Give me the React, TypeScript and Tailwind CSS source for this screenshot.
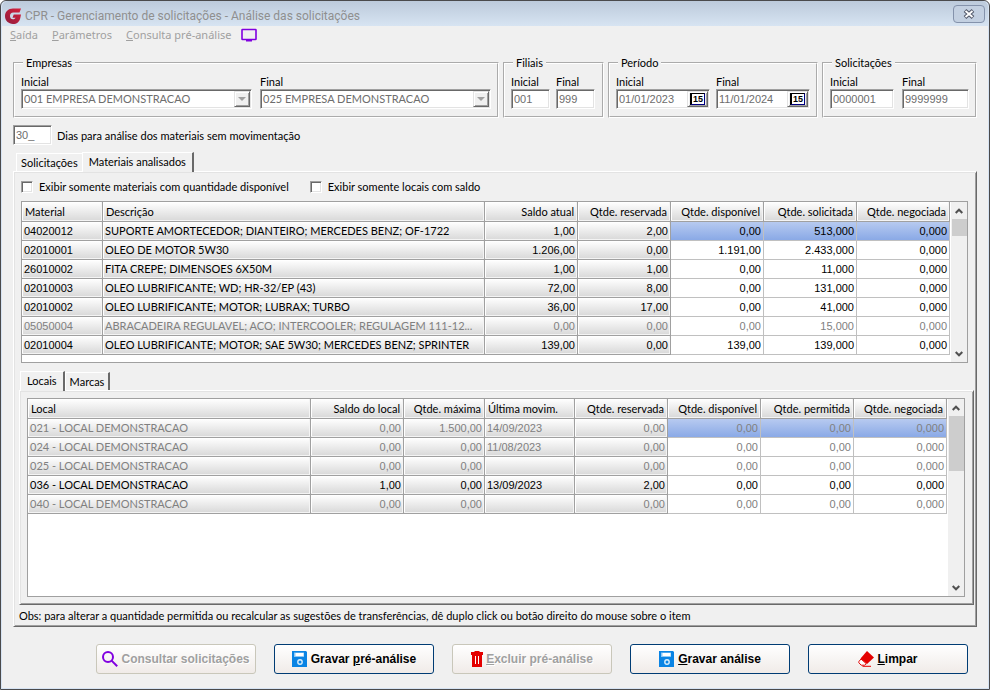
import { useState } from 'react'
import type { ReactNode } from 'react'
import clsx from 'clsx'

type Row = { cells: string[]; muted?: boolean }
type Column = { title: string; width?: string; right?: boolean; fixed?: boolean; digits?: boolean }

const materialColumns: Column[] = [
  { title: 'Material', width: 'w-[81px]', fixed: true, digits: true },
  { title: 'Descrição', fixed: true },
  { title: 'Saldo atual', width: 'w-[93px]', right: true, fixed: true, digits: true },
  { title: 'Qtde. reservada', width: 'w-[93px]', right: true, fixed: true, digits: true },
  { title: 'Qtde. disponível', width: 'w-[93px]', right: true, digits: true },
  { title: 'Qtde. solicitada', width: 'w-[93px]', right: true, digits: true },
  { title: 'Qtde. negociada', width: 'w-[93px]', right: true, digits: true },
]

const materialRows: Row[] = [
  { cells: ['04020012', 'SUPORTE AMORTECEDOR; DIANTEIRO; MERCEDES BENZ; OF-1722', '1,00', '2,00', '0,00', '513,000', '0,000'] },
  { cells: ['02010001', 'OLEO DE MOTOR 5W30', '1.206,00', '0,00', '1.191,00', '2.433,000', '0,000'] },
  { cells: ['26010002', 'FITA CREPE; DIMENSOES 6X50M', '1,00', '1,00', '0,00', '11,000', '0,000'] },
  { cells: ['02010003', 'OLEO LUBRIFICANTE; WD; HR-32/EP (43)', '72,00', '8,00', '0,00', '131,000', '0,000'] },
  { cells: ['02010002', 'OLEO LUBRIFICANTE; MOTOR; LUBRAX; TURBO', '36,00', '17,00', '0,00', '41,000', '0,000'] },
  { cells: ['05050004', 'ABRACADEIRA REGULAVEL; ACO; INTERCOOLER; REGULAGEM 111-12...', '0,00', '0,00', '0,00', '15,000', '0,000'], muted: true },
  { cells: ['02010004', 'OLEO LUBRIFICANTE; MOTOR; SAE 5W30; MERCEDES BENZ; SPRINTER', '139,00', '0,00', '139,00', '139,000', '0,000'] },
]

const localColumns: Column[] = [
  { title: 'Local', fixed: true },
  { title: 'Saldo do local', width: 'w-[93px]', right: true, fixed: true, digits: true },
  { title: 'Qtde. máxima', width: 'w-[81px]', right: true, fixed: true, digits: true },
  { title: 'Última movim.', width: 'w-[90px]', fixed: true, digits: true },
  { title: 'Qtde. reservada', width: 'w-[93px]', right: true, fixed: true, digits: true },
  { title: 'Qtde. disponível', width: 'w-[93px]', right: true, digits: true },
  { title: 'Qtde. permitida', width: 'w-[93px]', right: true, digits: true },
  { title: 'Qtde. negociada', width: 'w-[93px]', right: true, digits: true },
]

const localRows: Row[] = [
  { cells: ['021 - LOCAL DEMONSTRACAO', '0,00', '1.500,00', '14/09/2023', '0,00', '0,00', '0,00', '0,000'], muted: true },
  { cells: ['024 - LOCAL DEMONSTRACAO', '0,00', '0,00', '11/08/2023', '0,00', '0,00', '0,00', '0,000'], muted: true },
  { cells: ['025 - LOCAL DEMONSTRACAO', '0,00', '0,00', '', '0,00', '0,00', '0,00', '0,000'], muted: true },
  { cells: ['036 - LOCAL DEMONSTRACAO', '1,00', '0,00', '13/09/2023', '2,00', '0,00', '0,00', '0,000'] },
  { cells: ['040 - LOCAL DEMONSTRACAO', '0,00', '0,00', '', '0,00', '0,00', '0,00', '0,000'], muted: true },
]

const sunken =
  'border border-t-[#a0a0a0] border-l-[#a0a0a0] border-r-white border-b-white bg-white shadow-[inset_1px_1px_#696969,inset_-1px_-1px_#e3e3e3]'
const raised =
  'border border-t-[#e3e3e3] border-l-[#e3e3e3] border-r-[#696969] border-b-[#696969] bg-[#f0f0f0] shadow-[inset_1px_1px_#fff,inset_-1px_-1px_#a0a0a0]'
const panel =
  'border border-t-white border-l-white border-r-[#696969] border-b-[#696969] shadow-[inset_1px_1px_#e3e3e3,inset_-1px_-1px_#a0a0a0]'
const digitFont = "font-['Liberation_Sans',Arial,sans-serif]"

function LogoIcon() {
  return (
    <svg viewBox="0 0 16 16" className="size-4" aria-hidden="true">
      <defs>
        <linearGradient id="logo" x1="0" y1="1" x2="1" y2="0">
          <stop offset="0" stopColor="#8f1d3f" />
          <stop offset="1" stopColor="#d8203a" />
        </linearGradient>
      </defs>
      <path
        fill="url(#logo)"
        d="M16 .4 14.500 4.600H8.200C6.200 4.600 5 6 5 8s1.200 3.300 3 3.300c1.300 0 2.200-.6 2.600-1.500H7.500L8.700 6.500H16l-.7 3.400C14.600 13.600 11.800 16 8 16c-4.600 0-8-3.300-8-7.900C0 3.500 3.300.4 8 .4z"
      />
    </svg>
  )
}

function MonitorIcon() {
  return (
    <svg viewBox="0 0 16 14" className="h-[14px] w-4" aria-hidden="true">
      <rect x="1" y="1.500" width="14" height="10" rx="0.500" fill="none" stroke="#8000e0" strokeWidth="1.600" />
      <path d="M5 12h6v1.500H5z" fill="#8000e0" />
    </svg>
  )
}

function SearchIcon() {
  return (
    <svg viewBox="0 0 16 16" className="size-4" fill="none" stroke="#8000e0" strokeWidth="2" aria-hidden="true">
      <circle cx="6" cy="6" r="5" />
      <path d="M9.600 9.600 15.200 15.200" />
    </svg>
  )
}

function SaveIcon() {
  return (
    <svg viewBox="0 0 16 16" className="size-4" aria-hidden="true">
      <path d="M0 0h14l1 1v15H0z" fill="#0a84e4" />
      <path d="M2 1.500h10v4.500H2z" fill="#8cc8f6" />
      <path d="M3.500 2h8v3h-8z" fill="#fff" />
      <circle cx="8" cy="11" r="2.200" fill="none" stroke="#d9eefc" strokeWidth="1.400" />
    </svg>
  )
}

function TrashIcon() {
  return (
    <svg viewBox="0 0 12 16" className="h-4 w-3" aria-hidden="true">
      <path d="M0 1h3.500V0h5v1H12v3H0zM1 4h10v12H1z" fill="#e40000" />
      <path d="M4.500 5v8M7.500 5v8" stroke="#fff" strokeWidth="1" />
    </svg>
  )
}

function EraserIcon() {
  return (
    <svg viewBox="0 0 16 16" className="size-4" aria-hidden="true">
      <path d="M9 0 16 6.500 9 13 2.500 7.500z" fill="#e40000" />
      <path d="M3 8 1 10.400c-.4.500-.4 1 0 1.500l2.200 2.300h3.300l1.800-1.500z" fill="#fff" stroke="#e40000" strokeWidth="1" />
      <path d="M4.500 15.300H13" stroke="#e40000" strokeWidth="1" />
    </svg>
  )
}

function CalendarIcon() {
  return (
    <span
      className={clsx(
        'flex h-3 w-[15px] items-center justify-center border border-t-black border-r-[#000080] border-b-[#000080] border-l-2 border-l-black bg-white text-[9px] leading-none font-bold text-black',
        digitFont,
      )}
    >
      15
    </span>
  )
}

function Chevron({ up }: { up?: boolean }) {
  return (
    <svg viewBox="0 0 8 6" className="h-[6px] w-2" fill="none" stroke="#505050" strokeWidth="2" aria-hidden="true">
      <path d={up ? 'M0.700 5 4 1.700 7.300 5' : 'M0.700 1 4 4.300 7.300 1'} />
    </svg>
  )
}

function Group({ title, className, gap, children }: { title: string; className: string; gap: string; children: ReactNode }) {
  return (
    <fieldset className={clsx('min-w-0 border-2 border-white px-1.5 pb-[7px] [border-style:groove]', className)}>
      <legend className="ml-0.5 px-[3px] leading-[14px]">{title}</legend>
      <div className={clsx('flex pt-[5px]', gap)}>{children}</div>
    </fieldset>
  )
}

function Field({ id, label, value, className }: { id: string; label: string; value: string; className: string }) {
  return (
    <div className={className}>
      <label htmlFor={id} className="block h-[14px] leading-[14px]">{label}</label>
      <input id={id} defaultValue={value} disabled className={clsx('h-5 w-full pl-0.5 text-[#6d6d6d]', sunken, digitFont)} />
    </div>
  )
}

function SelectField({ id, label, value }: { id: string; label: string; value: string }) {
  return (
    <div className="min-w-0 flex-1">
      <label htmlFor={id} className="block h-[14px] leading-[14px]">{label}</label>
      <div className="relative">
        <select
          id={id}
          disabled
          className={clsx('block h-5 w-full appearance-none rounded-none pl-0.5 text-[#6d6d6d] opacity-100', sunken)}
        >
          <option>{value}</option>
        </select>
        <span className={clsx('pointer-events-none absolute top-0.5 right-0.5 flex h-4 w-4 items-center justify-center', raised)}>
          <svg viewBox="0 0 8 4" className="h-1 w-2" aria-hidden="true">
            <path d="M0 0h8L4 4z" fill="#a0a0a0" />
          </svg>
        </span>
      </div>
    </div>
  )
}

function DateField({ id, label, value }: { id: string; label: string; value: string }) {
  return (
    <div className="min-w-0 flex-1">
      <label htmlFor={id} className="block h-[14px] leading-[14px]">{label}</label>
      <div className={clsx('flex h-5 items-center p-px', sunken)}>
        <input id={id} defaultValue={value} disabled className={clsx('h-4 min-w-0 flex-1 pl-px text-[#6d6d6d]', digitFont)} />
        <button type="button" aria-label={`Calendário ${label}`} className={clsx('flex h-4 w-[21px] items-center justify-center', raised)}>
          <CalendarIcon />
        </button>
      </div>
    </div>
  )
}

function Check({ children }: { children: ReactNode }) {
  return (
    <label className="flex items-center gap-1.5">
      <input type="checkbox" className={clsx('size-3 appearance-none', sunken)} />
      {children}
    </label>
  )
}

function Tab({ active, last, onClick, children }: { active: boolean; last?: boolean; onClick: () => void; children: ReactNode }) {
  return (
    <button
      type="button"
      role="tab"
      aria-selected={active}
      onClick={onClick}
      className={clsx(
        'border-t border-l border-white bg-[#f0f0f0] whitespace-nowrap',
        active ? 'relative -mb-px h-5 px-[6px] pb-0.5' : 'h-[18px] px-1',
        (active || last) && 'border-r-2 border-r-[#696969]',
      )}
    >
      {children}
    </button>
  )
}

function ScrollBar({ thumb }: { thumb: string }) {
  return (
    <div className="ml-px flex w-4 shrink-0 flex-col items-center bg-[#f0f0f0]">
      <div className="flex h-[17px] items-center"><Chevron up /></div>
      <div className={clsx('w-[15px] bg-[#cdcdcd]', thumb)} />
      <div className="mt-auto flex h-[17px] items-center"><Chevron /></div>
    </div>
  )
}

const raisedCell = 'bg-linear-to-b from-white to-[#d8d8d8] shadow-[inset_-1px_-1px_#f4f4f4,inset_1px_1px_#fff] border-[#a0a0a0]'

function DataGrid({ columns, rows, thumb, className }: { columns: Column[]; rows: Row[]; thumb: string; className?: string }) {
  return (
    <div className={clsx('flex border border-[#a0a0a0] bg-white', className)}>
      <div className="min-w-0 flex-1 pb-[7px]">
        <table className="w-full table-fixed border-separate border-spacing-0">
          <thead>
            <tr className="h-5">
              {columns.map((c) => (
                <th
                  key={c.title}
                  className={clsx(
                    'border-r border-b px-[3px] py-0 font-normal whitespace-nowrap',
                    raisedCell,
                    c.width,
                    c.right ? 'text-right' : 'text-left',
                  )}
                >
                  {c.title}
                </th>
              ))}
            </tr>
          </thead>
          <tbody>
            {rows.map((row, r) => (
              <tr key={row.cells[0]} className={clsx('h-[19px]', row.muted ? 'text-[#808080]' : 'text-black')}>
                {columns.map((c, i) => (
                  <td
                    key={c.title}
                    className={clsx(
                      'overflow-hidden border-r border-b px-0.5 py-0 whitespace-nowrap',
                      c.right && 'text-right',
                      c.digits && digitFont,
                      c.fixed ? raisedCell : 'border-[#c0c0c0]',
                      !c.fixed && r === 0 && 'bg-linear-to-b from-[#b7caf0] to-[#8aa9e6]',
                    )}
                  >
                    {row.cells[i]}
                  </td>
                ))}
              </tr>
            ))}
          </tbody>
        </table>
      </div>
      <ScrollBar thumb={thumb} />
    </div>
  )
}

function ActionButton({ icon, disabled, children }: { icon: ReactNode; disabled?: boolean; children: ReactNode }) {
  return (
    <button
      type="button"
      disabled={disabled}
      className={clsx(
        'flex h-[30px] w-40 items-center justify-center gap-[3px] rounded-[3px] border bg-linear-to-b from-white to-[#f0ebe8] text-xs font-bold',
        digitFont,
        disabled ? 'border-[#c9c7ba] text-[#a0a0a0] [text-shadow:1px_1px_#fff]' : 'border-[#003c74] text-black',
      )}
    >
      {icon}
      <span>{children}</span>
    </button>
  )
}

export default function App() {
  const [tab, setTab] = useState('materiais')
  const [subTab, setSubTab] = useState('locais')

  return (
    <div className="flex min-h-screen flex-col rounded-t-md border border-[#4a4a4c] bg-[#d6e3f3] px-px pb-px font-['Lato',sans-serif] text-[11px] leading-[14px] text-black">
      <header className="flex h-[25px] items-center gap-1 rounded-t-md bg-linear-to-b from-[#bccadb] to-[#d7e4f2] px-[3px] pt-1">
        <LogoIcon />
        <h1 className="font-['Roboto',sans-serif] text-xs text-[#8f8f8f]">CPR - Gerenciamento de solicitações - Análise das solicitações</h1>
        <button
          type="button"
          aria-label="Fechar"
          className="mb-1 ml-auto flex h-[18px] w-8 items-center justify-center rounded-sm border border-[#8492ab] bg-[#c3d0e1]"
        >
          <svg viewBox="0 0 12 10" className="h-[10px] w-3" aria-hidden="true">
            <path d="M2 1.500 10 8.500M10 1.500 2 8.500" stroke="#53596a" strokeWidth="4" />
            <path d="M2.500 2 9.500 8M9.500 2 2.500 8" stroke="#fff" strokeWidth="1.800" />
          </svg>
        </button>
      </header>

      <main className="flex flex-1 flex-col bg-[#f0f0f0] px-[11px] pb-[14px]">
        <nav className="-ml-[3px] flex h-[18px] items-center gap-[14px] font-['Noto_Sans',sans-serif] text-[11px] text-[#a0a0a0]">
          <button type="button"><u>S</u>aída</button>
          <button type="button"><u>P</u>arâmetros</button>
          <button type="button" className="flex items-center gap-2.5">
            <span><u>C</u>onsulta pré-análise</span>
            <MonitorIcon />
          </button>
        </nav>

        <div className="mt-3 flex gap-1">
          <Group title="Empresas" className="flex-1" gap="gap-2">
            <SelectField id="empresa-inicial" label="Inicial" value="001 EMPRESA DEMONSTRACAO" />
            <SelectField id="empresa-final" label="Final" value="025 EMPRESA DEMONSTRACAO" />
          </Group>
          <Group title="Filiais" className="w-[101px]" gap="gap-1.5">
            <Field id="filial-inicial" label="Inicial" value="001" className="w-[39px]" />
            <Field id="filial-final" label="Final" value="999" className="w-[39px]" />
          </Group>
          <Group title="Período" className="w-[210px]" gap="gap-1.5">
            <DateField id="periodo-inicial" label="Inicial" value="01/01/2023" />
            <DateField id="periodo-final" label="Final" value="11/01/2024" />
          </Group>
          <Group title="Solicitações" className="w-[155px]" gap="gap-2">
            <Field id="solicitacao-inicial" label="Inicial" value="0000001" className="w-16" />
            <Field id="solicitacao-final" label="Final" value="9999999" className="flex-1" />
          </Group>
        </div>

        <div className="mt-[7px] flex items-center gap-[5px]">
          <input id="dias" defaultValue="30_" className={clsx('h-5 w-[39px] pl-0.5 text-[#6d6d6d]', sunken, digitFont)} />
          <label htmlFor="dias" className="pt-px">Dias para análise dos materiais sem movimentação</label>
        </div>

        <div className="mt-[7px] flex items-end pl-[3px]" role="tablist">
          <Tab active={tab === 'solicitacoes'} onClick={() => setTab('solicitacoes')}>Solicitações</Tab>
          <Tab active={tab === 'materiais'} last onClick={() => setTab('materiais')}>Materiais analisados</Tab>
        </div>
        <section className={clsx('flex flex-1 flex-col pt-2 pr-0.5 pb-[3px] pl-[5px]', panel)}>
          <div className="flex gap-[21px] px-0.5">
            <Check>Exibir somente materiais com quantidade disponível</Check>
            <Check>Exibir somente locais com saldo</Check>
          </div>
          <DataGrid columns={materialColumns} rows={materialRows} thumb="h-[17px]" className="mt-[7px] mr-1.5 ml-0.5" />

          <div className="mt-2 flex items-end pl-px" role="tablist">
            <Tab active={subTab === 'locais'} onClick={() => setSubTab('locais')}>Locais</Tab>
            <Tab active={subTab === 'marcas'} last onClick={() => setSubTab('marcas')}>Marcas</Tab>
          </div>
          <div className={clsx('flex flex-1 flex-col p-[7px] pr-2', panel)}>
            <DataGrid columns={localColumns} rows={localRows} thumb="h-[55px]" className="flex-1" />
          </div>
          <p className="mt-1">
            Obs: para alterar a quantidade permitida ou recalcular as sugestões de transferências, dê duplo click ou botão direito do mouse sobre o item
          </p>
        </section>

        <footer className="mt-[17px] flex justify-end gap-[18px] pr-[9px]">
          <ActionButton icon={<SearchIcon />} disabled>Consultar solicitações</ActionButton>
          <ActionButton icon={<SaveIcon />}>Gravar <u>p</u>ré-análise</ActionButton>
          <ActionButton icon={<TrashIcon />} disabled><u>E</u>xcluir pré-análise</ActionButton>
          <ActionButton icon={<SaveIcon />}><u>G</u>ravar análise</ActionButton>
          <ActionButton icon={<EraserIcon />}><u>L</u>impar</ActionButton>
        </footer>
      </main>
    </div>
  )
}
